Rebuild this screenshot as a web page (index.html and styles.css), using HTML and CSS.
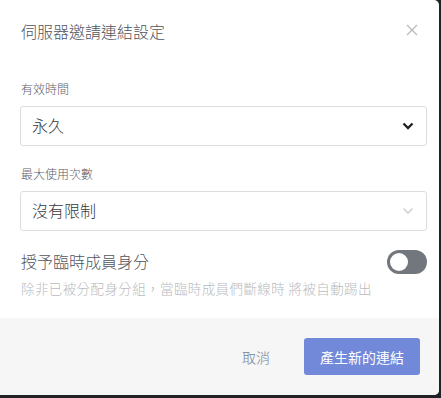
FILE: index.html
```html
<!DOCTYPE html>
<html lang="zh-Hant">
<head>
    <meta charset="UTF-8">
    <meta name="viewport" content="width=device-width, initial-scale=1.0">
    <title>伺服器邀請連結設定</title>
    <link rel="stylesheet" href="styles.css">
</head>
<body>
    <div class="modal">
        <div class="modal-header">
            <h2>伺服器邀請連結設定</h2>
            <button class="close-button" aria-label="關閉">
                <svg width="12" height="12" viewBox="0 0 12 12">
                    <path d="M1 1L11 11M11 1L1 11" stroke="#b9bbbe" stroke-width="1.3" fill="none"/>
                </svg>
            </button>
        </div>

        <div class="modal-content">
            <div class="field">
                <div class="field-label">有效時間</div>
                <div class="select select-open">
                    <span>永久</span>
                    <svg class="chevron" width="12" height="8" viewBox="0 0 12 8">
                        <path d="M1.5 1.5L6 6L10.5 1.5" stroke="#202225" stroke-width="2.4" fill="none"/>
                    </svg>
                </div>
            </div>

            <div class="field">
                <div class="field-label">最大使用次數</div>
                <div class="select">
                    <span>沒有限制</span>
                    <svg class="chevron" width="12" height="8" viewBox="0 0 12 8">
                        <path d="M1.5 1.5L6 6L10.5 1.5" stroke="#cfd1d4" stroke-width="1.6" fill="none"/>
                    </svg>
                </div>
            </div>

            <div class="toggle-row">
                <div class="toggle-title">授予臨時成員身分</div>
                <div class="toggle">
                    <div class="toggle-knob"></div>
                </div>
            </div>
            <p class="toggle-note">除非已被分配身分組，當臨時成員們斷線時 將被自動踢出</p>
        </div>

        <div class="modal-footer">
            <button class="cancel-button">取消</button>
            <button class="primary-button">產生新的連結</button>
        </div>
    </div>
</body>
</html>
```

FILE: styles.css
```css
body {
    margin: 0;
    padding: 0;
    background-color: #202225;
    font-family: "Noto Sans CJK TC", "Noto Sans", sans-serif;
    font-weight: 300;
}

.modal {
    width: 439px;
    height: 395px;
    background-color: #ffffff;
    border-radius: 0 5px 5px 0;
    overflow: hidden;
    display: flex;
    flex-direction: column;
}

.modal-header {
    display: flex;
    align-items: center;
    justify-content: space-between;
    padding: 20px 21px 20px 21px;
}

.modal-header h2 {
    margin: 0;
    font-size: 16px;
    line-height: 22px;
    font-weight: 300;
    color: #4f545c;
}

.close-button {
    background: none;
    border: none;
    padding: 0;
    width: 12px;
    height: 12px;
    display: flex;
    margin-top: -3px;
    cursor: pointer;
}

.modal-content {
    flex: 1;
    padding: 0 12px 0 20px;
}

.field {
    margin-bottom: 20px;
}

.field-label {
    font-size: 12px;
    line-height: 16px;
    color: #5c6068;
    margin-top: 19px;
    margin-bottom: 9px;
    padding-left: 1px;
}

.field + .field .field-label {
    margin-top: 0;
}

.select {
    height: 38px;
    border: 1px solid #dcddde;
    border-radius: 3px;
    display: flex;
    align-items: center;
    justify-content: space-between;
    padding: 0 12px 0 11px;
    font-size: 16px;
    color: #36393f;
}

.select span {
    margin-top: -3px;
}

.toggle-row {
    display: flex;
    align-items: center;
    justify-content: space-between;
    height: 24px;
    margin-top: -1px;
}

.toggle-title {
    font-size: 16px;
    line-height: 24px;
    color: #4f545c;
    padding-left: 1px;
    margin-top: -2px;
}

.toggle {
    width: 40px;
    height: 24px;
    border-radius: 12px;
    background-color: #72767d;
    display: flex;
    align-items: center;
    padding-left: 3px;
    box-sizing: border-box;
}

.toggle-knob {
    width: 18px;
    height: 18px;
    border-radius: 50%;
    background-color: #ffffff;
}

.toggle-note {
    margin: 5px 0 0 1px;
    font-size: 13.5px;
    line-height: 18px;
    letter-spacing: 0.4px;
    color: #b9bbbe;
}

.modal-footer {
    background-color: #f6f6f7;
    display: flex;
    align-items: center;
    justify-content: flex-end;
    padding: 20px 19px;
}

.cancel-button {
    background: none;
    border: none;
    font-family: inherit;
    font-weight: 300;
    font-size: 14px;
    color: #747f8d;
    padding: 0 16px;
    margin-right: 18px;
    height: 37px;
    cursor: pointer;
}

.primary-button {
    background-color: #7289da;
    border: none;
    border-radius: 3px;
    color: #ffffff;
    font-family: inherit;
    font-weight: 400;
    font-size: 14px;
    width: 116px;
    height: 37px;
    cursor: pointer;
}
```
